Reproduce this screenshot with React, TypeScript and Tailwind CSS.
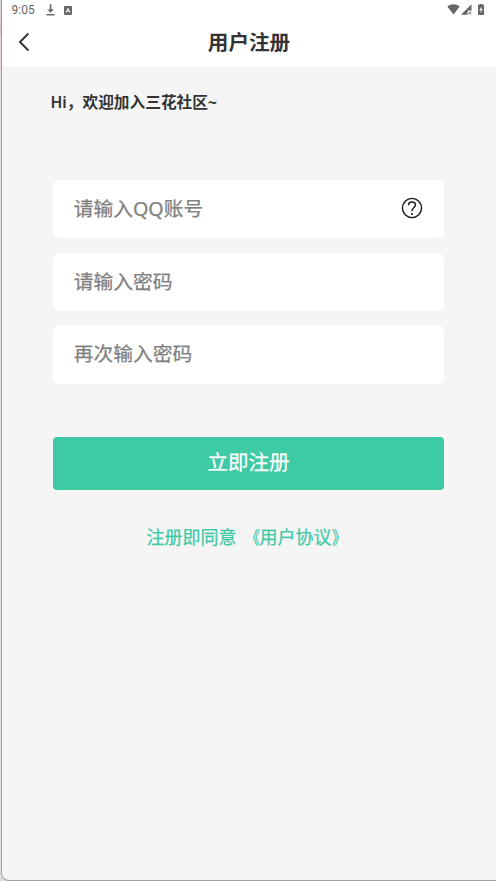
import React from 'react';

const cjk = "font-['Noto_Sans','Noto_Sans_CJK_SC',sans-serif]";

function StatusBar() {
  return (
    <div className="flex h-5 items-center pl-[9.5px] pr-[12px] text-[#666666]">
      <span className="w-[24px] font-['Roboto',sans-serif] text-[12px] leading-5">9:05</span>
      <svg className="ml-[10px]" width="9" height="12" viewBox="0 0 9 12" fill="currentColor">
        <path d="M3.7 0.3h1.7v5h2.4L4.6 8.7 1.3 5.5h2.4zM0.5 10h8v1.4h-8z" />
      </svg>
      <svg className="ml-[9px]" width="8" height="9" viewBox="0 0 8 9">
        <rect width="8" height="9" rx="1" fill="currentColor" />
        <path d="M2 6.5 4 2.3 6 6.5M2.8 5.2h2.4" fill="none" stroke="white" strokeWidth="1" />
      </svg>
      <svg className="-mt-[1px] ml-auto" width="13" height="11" viewBox="0 0 13 11" fill="currentColor">
        <path d="M0.3 2.6C4-0.5 9-0.5 12.7 2.6L6.5 10.5z" />
      </svg>
      <svg className="-mt-[1px] ml-[1px]" width="11" height="11" viewBox="0 0 11 11">
        <path d="M10.5 0.3v6.2H6.5v4.2H0z" fill="currentColor" />
        <path d="m7.4 7.5 2.8 3m0-3-2.8 3" stroke="currentColor" strokeWidth="0.9" />
      </svg>
      <svg className="-mt-[1px] ml-[6.5px]" width="6" height="11" viewBox="0 0 6 11">
        <path d="M1.5 0h3v.8H6V10.3a.7.7 0 0 1-.7.7H.7a.7.7 0 0 1-.7-.7V.8h1.5z" fill="currentColor" />
        <path d="M3.4 2.4 1.4 6h1.3v3l2-3.7H3.4z" fill="white" />
      </svg>
    </div>
  );
}

function Field({ label, help = false }: { label: string; help?: boolean }) {
  return (
    <div className="flex h-[58.3px] items-center justify-between rounded-[6px] bg-white pl-[20.7px] pr-[21.5px]">
      <span className="-mt-[0.45px] text-[19.75px] leading-[58px] text-[#808080] [-webkit-text-stroke:0.25px_#808080]">{label}</span>
      {help && (
        <svg className="-mt-[3px]" width="22" height="22" viewBox="0 0 22 22" fill="none" stroke="#1a1a1a">
          <circle cx="11" cy="11" r="9.6" strokeWidth="1.4" />
          <path d="M7.6 8.2c0-2.1 1.4-3.3 3.4-3.3s3.4 1.2 3.4 3c0 2.5-3.4 2.9-3.4 6.3" strokeWidth="1.5" />
          <circle cx="11" cy="16.9" r="1" fill="#1a1a1a" stroke="none" />
        </svg>
      )}
    </div>
  );
}

export default function App() {
  return (
    <div className="h-[881px] w-[496px] overflow-hidden bg-[linear-gradient(#e0d2d3_0px,#d2c1c4_35px,#e4d4d5_36px,#e4d4d5_69px,#dddddd_70px)]">
      <div className={`ml-px h-[881px] overflow-hidden rounded-bl-[8px] border-b border-l border-[#a0a0a0] bg-[#f5f5f5] ${cjk}`}>
        <header className="h-[66px] bg-white">
          <StatusBar />
          <div className="grid h-[46px] grid-cols-[60px_1fr_60px] items-center">
            <svg className="ml-[16px] -mt-[2px]" width="12" height="20" viewBox="0 0 12 20" fill="none" stroke="#333333" strokeWidth="1.9">
              <path d="M10.4 1.5 2 10l8.4 8.5" />
            </svg>
            <h1 className="-mt-[2px] text-center text-[20.6px] font-bold leading-[42px] text-[#333333]">用户注册</h1>
          </div>
        </header>
        <main className="pl-[51px] pr-[52px]">
          <p className="-ml-[2.5px] mt-[21px] h-[30px] text-[15.7px] font-bold leading-[30px] text-[#333333]">
            <span className="font-semibold">Hi</span>，欢迎加入三花社区~
          </p>
          <div className="mt-[63px] flex flex-col gap-[14.4px]">
            <Field label="请输入QQ账号" help />
            <Field label="请输入密码" />
            <Field label="再次输入密码" />
          </div>
          <button className="mt-[53.3px] block h-[53px] w-full rounded-[4px] bg-[#3fcaa6] pb-[2px] text-[20.5px] leading-[51px] text-white [-webkit-text-stroke:0.25px_white]">立即注册</button>
          <p className="mt-[32px] flex justify-center gap-[5px] text-[18px] leading-[30px] text-[#3fcaa6] [-webkit-text-stroke:0.25px_#3fcaa6]">
            <span className="-ml-px">注册即同意</span>
            <span className="flex">
              <span className="origin-right scale-x-[0.8]">《</span>
              用户协议
              <span className="origin-left scale-x-[0.8]">》</span>
            </span>
          </p>
        </main>
      </div>
    </div>
  );
}
